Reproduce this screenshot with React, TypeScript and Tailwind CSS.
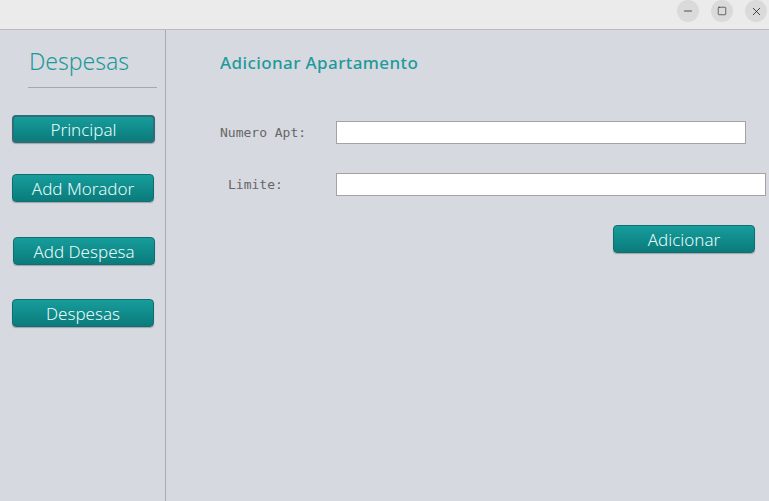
import { Minus, Square, X } from 'lucide-react';

const navItems = [
  { label: 'Principal', cls: 'mt-[27px] ml-[12px] w-[143px]', active: true },
  { label: 'Add Morador', cls: 'mt-[31px] ml-[12px] w-[142px]', active: false },
  { label: 'Add Despesa', cls: 'mt-[35px] ml-[13px] w-[142px]', active: false },
  { label: 'Despesas', cls: 'mt-[34px] ml-[12px] w-[142px]', active: false },
];

function TealButton({ label, className, active }: { label: string; className?: string; active?: boolean }) {
  return (
    <button
      className={`flex h-[28px] items-center justify-center rounded-[4px] bg-gradient-to-b from-[#169d9c] to-[#0b7b7b] pt-[1px] text-[17px] font-light leading-none text-[#e6fbfb] shadow-[0_1px_1px_rgba(0,0,0,0.25)] ${
        active ? 'border-2 border-[#2f6d78]' : 'border border-[#0f6f70]'
      } ${className ?? ''}`}
    >
      {label}
    </button>
  );
}

function WindowButton({ children }: { children: React.ReactNode }) {
  return (
    <div className="flex h-[22px] w-[22px] items-center justify-center rounded-full bg-[#dadada] text-[#222]">
      {children}
    </div>
  );
}

export default function App() {
  return (
    <div
      className="flex h-[501px] w-[769px] flex-col overflow-hidden bg-[#d7d9e0]"
      style={{ fontFamily: '"Noto Sans", sans-serif' }}
    >
      <div className="flex h-[30px] shrink-0 items-start justify-end gap-[12px] border-b border-[#b9bbc0] bg-[#ebebeb] pr-[2px] pt-0">
        <WindowButton>
          <Minus size={12} strokeWidth={1.5} />
        </WindowButton>
        <WindowButton>
          <Square size={10} strokeWidth={1.5} />
        </WindowButton>
        <WindowButton>
          <X size={13} strokeWidth={1.5} />
        </WindowButton>
      </div>

      <div className="flex flex-1">
        <aside className="flex w-[166px] shrink-0 flex-col border-r border-[#a9acb2]">
          <div className="mt-[16px] pr-[7px] text-center text-[23px] font-light leading-[30px] text-[#21999a]">
            Despesas
          </div>
          <div className="ml-[28px] mt-[11px] h-px w-[129px] bg-[#a5a8ae]" />
          {navItems.map((item) => (
            <TealButton key={item.label} label={item.label} className={item.cls} active={item.active} />
          ))}
        </aside>

        <main className="flex flex-1 flex-col pl-[54px]">
          <h1 className="mt-[21px] text-[17px] font-medium leading-[24px] tracking-[0.4px] text-[#1f9a9b]">
            Adicionar Apartamento
          </h1>

          <div
            className="mt-[46px] flex flex-col text-[13px] text-[#666]"
            style={{ fontFamily: '"DejaVu Sans Mono", monospace' }}
          >
            <div className="flex items-center">
              <span className="w-[116px]">Numero Apt:</span>
              <input className="h-[23px] w-[410px] border border-[#a3a3a3] bg-white outline-none" />
            </div>
            <div className="mt-[29px] flex items-center">
              <span className="w-[116px] pl-[8px]">Limite:</span>
              <input className="h-[23px] w-[430px] border border-[#a3a3a3] bg-white outline-none" />
            </div>
          </div>

          <div className="mt-[29px] flex">
            <TealButton label="Adicionar" className="ml-[393px] w-[142px]" />
          </div>
        </main>
      </div>
    </div>
  );
}
